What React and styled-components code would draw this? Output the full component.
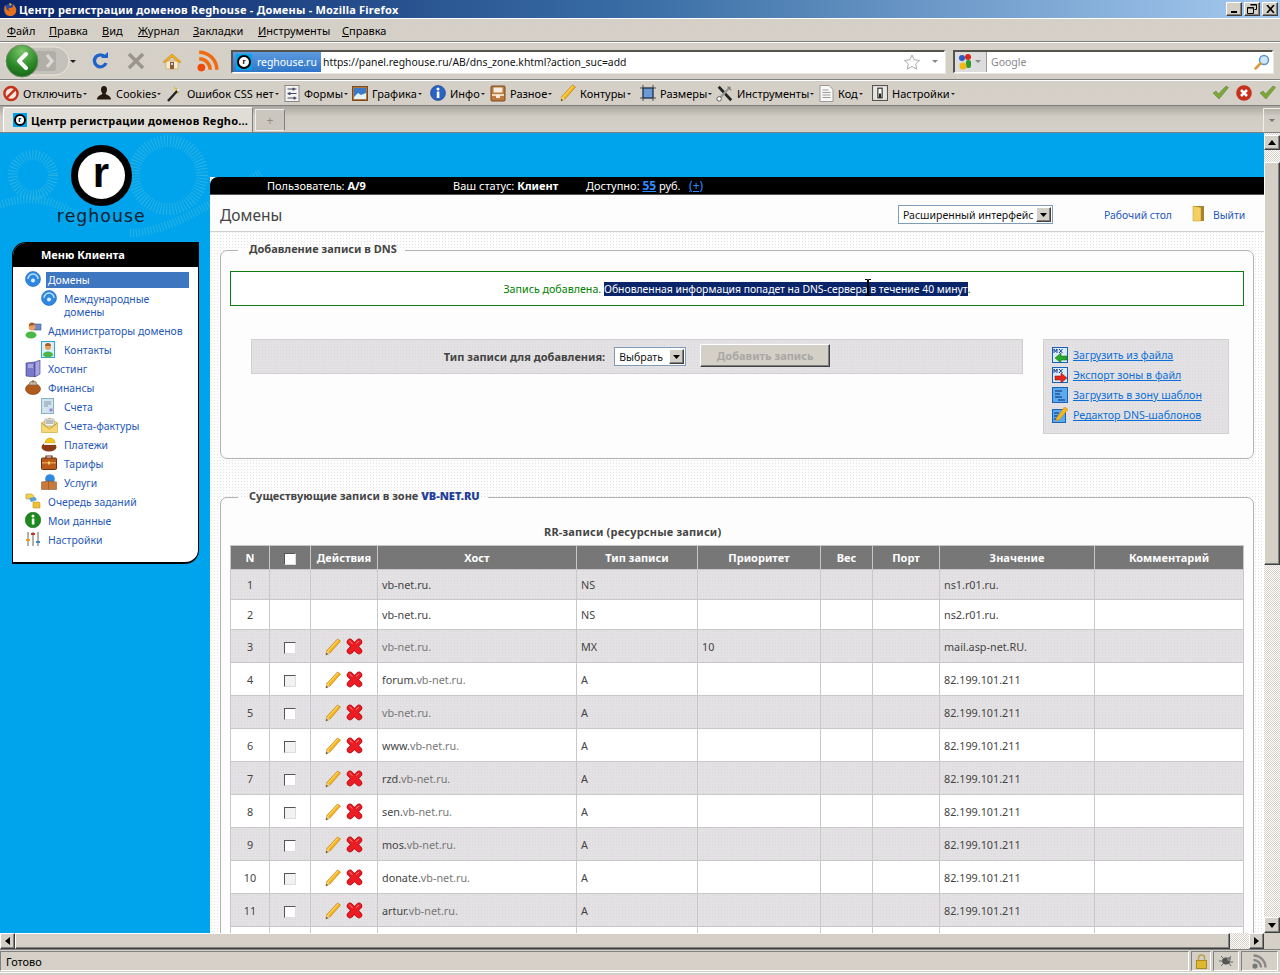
import React from 'react';
import styled, { createGlobalStyle } from 'styled-components';

const Global = createGlobalStyle`
  html, body { margin: 0; padding: 0; height: 100%; overflow: hidden; background: #d4d0c8; }
  body { font-family: "Noto Sans", "DejaVu Sans", sans-serif; font-size: 11px; color: #000; }
  * { box-sizing: border-box; }
`;

const chrome = `
  background-color: #d4d0c8;
  background-image: radial-gradient(#dcd2c2 0.7px, transparent 0.8px);
  background-size: 5px 5px;
`;
const dots = `
  background-color: #fdfdfd;
  background-image: radial-gradient(#e4e4e4 0.8px, transparent 0.9px);
  background-size: 3px 3px;
`;
const grayDots = `
  background-color: #e3e1e3;
  background-image: radial-gradient(#d8d8d8 0.8px, transparent 0.9px);
  background-size: 3px 3px;
`;
const raised = `
  background-color: #d4d0c8;
  border-top: 1px solid #fff; border-left: 1px solid #fff;
  border-right: 1px solid #404040; border-bottom: 1px solid #404040;
  box-shadow: inset -1px -1px 0 #808080;
`;
const dither = `
  background: repeating-conic-gradient(#d4d0c8 0 25%, #fff 0 50%) 0 0 / 2px 2px;
`;

const Window = styled.div`
  width: 1280px; height: 975px; display: flex; flex-direction: column; overflow: hidden;
  ${chrome}
`;
const TitleBar = styled.div`
  height: 18px; flex: none; display: flex; align-items: center; padding: 0 2px 0 3px;
  background: linear-gradient(90deg, #0a246a 0%, #3a6ea5 50%, #a6caf0 100%);
`;
const TitleText = styled.div`
  flex: 1; margin-left: 2px; color: #fff; font-weight: 700; font-size: 11px; letter-spacing: 0.22px;
  white-space: nowrap;
`;
const WinButtons = styled.div`display: flex; gap: 2px;`;
const WinButton = styled.div`
  width: 16px; height: 14px; ${raised} display: flex; align-items: center; justify-content: center;
`;
const MenuBar = styled.div`
  height: 24px; flex: none; display: flex; align-items: center; padding-left: 7px;
  border-top: 1px solid #fff; border-bottom: 1px solid #808080;
`;
const MenuItem = styled.div`
  width: ${p => p.$w}px; flex: none; white-space: nowrap;
  & u { text-decoration: underline; }
`;
const NavBar = styled.div`
  height: 38px; flex: none; display: flex; align-items: center; padding: 0 8px 0 4px;
  border-top: 1px solid #fff; border-bottom: 1px solid #808080;
`;
const BackForward = styled.div`
  width: 76px; height: 30px; flex: none; margin-right: 2px; display: flex; align-items: center;
`;
const NavIcon = styled.div`
  width: 36px; flex: none; display: flex; justify-content: center; align-items: center;
`;
const UrlBar = styled.div`
  width: 714px; height: 23px; flex: none; margin-left: 5px; display: flex; align-items: stretch;
  background: #fff; border: 1px solid #fff; border-top: 2px solid #55534c; border-left: 2px solid #55534c;
  box-shadow: 1px 1px 0 #e8e6e0; font-size: 10.4px;
`;
const Identity = styled.div`
  width: 88px; flex: none; display: flex; align-items: center; gap: 5px; padding-left: 3px; color: #fff;
  background: linear-gradient(#5c9ce0, #2f74c8);
`;
const UrlText = styled.div`flex: 1; padding: 3px 0 0 2px; color: #111; white-space: nowrap;`;
const BarEnd = styled.div`display: flex; align-items: center; gap: 12px; padding-right: 6px;`;
const Caret = styled.span`
  display: inline-block; width: 0; height: 0; flex: none;
  border-left: ${p => p.$s || 3}px solid transparent; border-right: ${p => p.$s || 3}px solid transparent;
  border-top: ${p => p.$s || 3}px solid ${p => p.$c || '#666'};
`;
const SearchBar = styled.div`
  width: 320px; height: 23px; flex: none; margin-left: 8px; display: flex; align-items: stretch;
  background: #fff; border: 1px solid #fff; border-top: 2px solid #55534c; border-left: 2px solid #55534c;
  box-shadow: 1px 1px 0 #e8e6e0; font-size: 10.5px;
`;
const Engine = styled.div`
  width: 32px; flex: none; display: flex; align-items: center; gap: 3px; padding-left: 3px;
  background: #ddd; border-right: 1px solid #999;
`;
const SearchText = styled.div`flex: 1; padding: 3px 0 0 4px; color: #888;`;
const SearchGo = styled.div`display: flex; align-items: center; padding-right: 2px;`;
const DevBar = styled.div`
  height: 26px; flex: none; display: flex; align-items: center; padding: 0 3px 0 3px;
  border-top: 1px solid #fff; border-bottom: 1px solid #808080;
`;
const DevItem = styled.div`
  width: ${p => p.$w}px; flex: none; display: flex; align-items: center; gap: 4px; white-space: nowrap;
  & > svg { flex: none; }
`;
const TinyCaret = styled.span`
  display: inline-block; width: 0; height: 0; margin: 0 0 0 1px; vertical-align: 3px;
  border-left: 2px solid transparent; border-right: 2px solid transparent; border-top: 2px solid #222;
`;
const DevEnd = styled.div`margin-left: auto; display: flex; gap: 7px; padding-right: 1px;`;
const TabBar = styled.div`
  height: 27px; flex: none; display: flex; align-items: flex-end; padding-left: 3px;
  background: linear-gradient(#a9a69e, #d0ccc4 40%, #d4d0c8);
  border-bottom: 1px solid #808080;
`;
const Tab = styled.div`
  width: 250px; height: 25px; flex: none; display: flex; align-items: center; gap: 4px; padding-left: 9px;
  background: #e0ddd6; border: 1px solid #fff; border-right-color: #808080; border-bottom: none;
  border-radius: 2px 2px 0 0; font-weight: 700; white-space: nowrap; overflow: hidden; letter-spacing: 0.2px;
`;
const NewTab = styled.div`
  width: 30px; height: 22px; flex: none; margin: 0 0 1px 2px; display: flex; align-items: center; justify-content: center;
  color: #8f8c85; font-size: 12px; background: #cbc7bf; border: 1px solid #eee; border-right-color: #808080;
`;
const TabList = styled.div`
  width: 17px; height: 24px; flex: none; margin-left: auto; display: flex; align-items: center; justify-content: center;
  border: 1px solid #f2f0ea; border-right: none; border-bottom: none;
`;
const Viewport = styled.div`flex: none; height: 800px; display: flex;`;
const Page = styled.div`
  position: relative; width: 1264px; flex: none; display: flex; overflow: hidden;
  background-color: #00a4ec;
`;
const Swirl = styled.svg`position: absolute; left: 0; top: 0;`;
const SideColumn = styled.div`
  position: relative; width: 210px; flex: none; padding-left: 12px; display: flex; flex-direction: column;
`;
const Logo = styled.div`
  height: 109px; width: 178px; flex: none; display: flex; flex-direction: column; align-items: center; padding-top: 12px;
  color: #111;
`;
const LogoRing = styled.div`
  width: 61px; height: 61px; border-radius: 50%; border: 7px solid #000; background: #fff;
  display: flex; align-items: center; justify-content: center;
  font: 700 42px/1 "Liberation Sans", sans-serif; color: #000; padding-bottom: 6px;
`;
const LogoName = styled.div`
  font: 400 18px/20px "DejaVu Sans", sans-serif; letter-spacing: 1.1px; color: #10202c; transform: scaleX(.96);
`;
const SideMenu = styled.nav`
  width: 187px; flex: none; background: #fff; border: 1px solid #000; border-bottom-width: 2px;
  border-radius: 14px 0 14px 0; overflow: hidden; padding-bottom: 12px;
`;
const SideHead = styled.div`
  height: 24px; background: #000; color: #fff; font-weight: 700; padding-left: 28px; line-height: 23px; margin-bottom: 4px;
`;
const SideRow = styled.div`
  display: flex; align-items: flex-start; padding: 3px 9px 3px ${p => (p.$sub ? 28 : 12)}px;
  line-height: 13px; color: #2457b8; font-size: 10.4px;
`;
const SideIcon = styled.div`width: 16px; height: 16px; margin-top: -3px; flex: none;`;
const SideLabel = styled.div`
  flex: 1; margin-left: 7px; white-space: nowrap;
  ${p => p.$on ? `
    margin-left: 5px; padding-left: 2px; color: #fff; margin-top: -2px; margin-bottom: -1px; padding-top: 2px; padding-bottom: 1px;
    background-color: #3f76c0;
  ` : ''}
`;
const Content = styled.main`
  position: relative; width: 1054px; flex: none; margin-top: 44px; display: flex; flex-direction: column; ${dots}
`;
const UserBar = styled.div`
  height: 18px; flex: none; background: #000; color: #fff; display: flex; align-items: center; line-height: 16px;
  border-radius: 8px 0 0 0; border-bottom: 1px solid #555;
`;
const UserCell = styled.div`width: ${p => p.$w}px; flex: none; white-space: nowrap;`;
const UserLink = styled.a`color: #2f8cff; font-size: 12px; text-decoration: underline;`;
const Header = styled.div`
  height: 37px; flex: none; background: #fdfdfd; border-bottom: 1px solid #d0d0d0; display: flex; align-items: center; padding: 3px 0 0 10px;
`;
const PageTitle = styled.h1`margin: 0; width: 678px; flex: none; font-size: 15.5px; font-weight: 400; color: #444;`;
const SelectBox = styled.div`
  display: flex; align-items: center; justify-content: space-between; width: ${p => p.$w}px; height: ${p => p.$h}px; flex: none;
  margin-left: ${p => p.$m || 0}px; font-weight: 400; font-size: 10.5px;
  background: #fff; border: 1px solid #7f9db9; padding: 0 1px 0 4px; color: #111; white-space: nowrap;
`;
const SelectArrow = styled.div`
  width: 15px; height: 15px; ${raised} display: flex; align-items: center; justify-content: center;
`;
const HeadLink = styled.a`color: #2457b8; white-space: nowrap; margin-left: ${p => p.$m}px; font-size: 10.4px;`;
const DoorWrap = styled.div`margin-left: 20px; width: 21px; flex: none;`;
const Body = styled.div`padding: 10px 10px 0;`;
const Fieldset = styled.fieldset`
  margin: 0 0 30px; padding: 13px 9px 0; min-width: 0; background: #fdfdfd;
  border: 1px solid #b5b1ad; border-radius: 7px;
`;
const Legend = styled.legend`
  margin-left: 8px; padding: 0 8px 3px 11px; font-weight: 700; color: #444; line-height: 13px;
  & b { color: #1f3f9a; }
`;
const Message = styled.div`
  height: 35px; border: 1px solid #0f7a0f; background: #fff; display: flex; align-items: center; justify-content: center;
  color: #008000; white-space: pre; font-size: 10.7px;
`;
const Selected = styled.span`background: #0a246a; color: #fff; font-size: 10.38px;`;
const CursorAnchor = styled.span`position: relative; display: inline-block; width: 0; height: 0;`;
const IBeam = styled.svg`position: absolute; left: -4px; top: -14px;`;
const AddArea = styled.div`display: flex; align-items: flex-start; padding: 33px 0 24px 21px;`;
const AddBar = styled.div`
  width: 772px; height: 35px; flex: none; display: flex; align-items: center; justify-content: center;
  ${grayDots} border: 1px solid #d0d0d0; color: #444; font-weight: 700;
`;
const AddButton = styled.div`
  width: 130px; height: 23px; flex: none; margin: -2px 0 0 14px; display: flex; align-items: center; justify-content: center;
  ${raised} color: #a9a7a3; font-weight: 700;
`;
const SidePanel = styled.div`
  width: 186px; height: 95px; flex: none; margin-left: 20px; padding: 5px 0 0 8px;
  ${grayDots} border: 1px solid #d0d0d0; display: flex; flex-direction: column;
`;
const PanelLink = styled.a`
  height: 20px; display: flex; align-items: center; gap: 5px; color: #0a6fd8; text-decoration: underline; white-space: nowrap; font-size: 10.6px;
`;
const Caption = styled.div`height: 27px; padding: 7px 0 0 314px; line-height: 13px; color: #444; font-weight: 700; white-space: nowrap; letter-spacing: .18px;`;
const Table = styled.table`
  width: 1013px; table-layout: fixed; border-collapse: collapse; border-spacing: 0;
`;
const Th = styled.th`
  height: 24px; padding: 0; background: #777; color: #fff; font-weight: 700; font-size: 11px; border: 1px solid #c8c8c8;
`;
const Td = styled.td`
  padding: 0 0 0 ${p => (p.$center ? 0 : 4)}px; height: ${p => p.$h}px; color: #444;
  text-align: ${p => (p.$center ? 'center' : 'left')};
  border: 1px solid #c8c8c8; white-space: nowrap; font-size: 10.8px;
`;
const Tr = styled.tr`
  ${p => p.$odd ? grayDots : 'background: #fff;'}
`;
const Dim = styled.span`color: #777;`;
const Check = styled.span`
  display: inline-block; width: 12px; height: 12px; vertical-align: middle; background: ${p => p.$light ? '#fff' : '#f2f2f2'};
  border-top: 1px solid #555; border-left: 1px solid #555; border-right: 1px solid #ddd; border-bottom: 1px solid #ddd;
`;
const Actions = styled.div`display: flex; justify-content: center; align-items: center; gap: 5px; padding-top: 1px;`;
const VScroll = styled.div`
  width: 16px; flex: none; display: flex; flex-direction: column; padding-top: 2px;
  ${dither}
`;
const ScrollBtn = styled.div`
  width: 16px; height: ${p => p.$h || 15}px; flex: none; ${raised} display: flex; align-items: center; justify-content: center;
`;
const VThumb = styled.div`height: 403px; margin-top: 12px; flex: none; ${raised} ${chrome}`;
const ScrollFill = styled.div`flex: 1;`;
const HScroll = styled.div`
  height: 16px; flex: none; display: flex;
  ${dither}
`;
const HThumb = styled.div`width: 1215px; flex: none; ${raised} ${chrome}`;
const HBtn = styled.div`
  width: 15px; flex: none; margin-left: ${p => p.$m || 0}px; ${raised} display: flex; align-items: center; justify-content: center;
`;
const Corner = styled.div`flex: 1; ${chrome}`;
const StatusBar = styled.div`
  height: 23px; flex: none; display: flex; gap: 2px; padding: 0 2px 0 0;
  border-top: 1px solid #808080;
`;
const StatusPanel = styled.div`
  width: ${p => p.$w ? p.$w + 'px' : 'auto'}; flex: ${p => p.$w ? 'none' : 1}; height: 20px; margin-top: 1px; display: flex; align-items: center;
  justify-content: ${p => p.$w ? 'center' : 'flex-start'}; padding-left: ${p => p.$w ? 0 : 5}px;
  border-top: 1px solid #808080; border-left: 1px solid #808080; border-right: 1px solid #fff; border-bottom: 1px solid #fff;
`;
const Tail = styled.div`flex: 1; border-top: 1px solid #fff;`;
const FavBox = styled.span`
  width: ${p => p.$s}px; height: ${p => p.$s}px; flex: none; background: #00a4ec; display: inline-flex; align-items: center; justify-content: center;
`;
const FavRing = styled.span`
  width: ${p => p.$s}px; height: ${p => p.$s}px; border-radius: 50%; background: #fff; border: 2px solid #000; color: #000;
  display: inline-flex; align-items: center; justify-content: center;
  font: 700 8px/1 "Liberation Sans", sans-serif;
`;

/* ---------- drawings ---------- */
const Firefox = () => (
  <svg width="14" height="15" viewBox="0 0 14 15">
    <circle cx="7" cy="8" r="6.3" fill="#2a4a9a" />
    <path d="M2 3C1 6 1 11 4 13c3 2 8 1 9-3 1-3-1-6-3-8 1 3-1 4-3 4C5 6 5 8 7 9 5 9 3 7 3 5z" fill="#e8701a" />
    <path d="M6 1l3 1-2 2z" fill="#f7b020" />
  </svg>
);
const Favicon = ({ size = 14 }) => (
  <FavBox $s={size}><FavRing $s={size - 2}>r</FavRing></FavBox>
);
const Back = () => (
  <svg width="66" height="34" viewBox="0 0 66 34">
    <rect x="1" y="3" width="64" height="28" rx="14" fill="#c4c1ba" stroke="#e8e6e0" />
    <rect x="28" y="7" width="24" height="20" rx="3" fill="#b2afa8" />
    <path d="M43 11l5 6-5 6" fill="none" stroke="#dddbd5" strokeWidth="3" />
    <defs>
      <radialGradient id="gb" cx=".5" cy=".2" r=".9"><stop offset="0" stopColor="#7cc46a" /><stop offset=".55" stopColor="#2d8a28" /><stop offset="1" stopColor="#0f5a12" /></radialGradient>
    </defs>
    <circle cx="18" cy="17" r="16" fill="url(#gb)" stroke="#6f8f6a" />
    <path d="M22 10l-7 7 7 7" fill="none" stroke="#fff" strokeWidth="4" strokeLinecap="round" strokeLinejoin="round" />
  </svg>
);
const Reload = () => (
  <svg width="18" height="18" viewBox="0 0 18 18">
    <path d="M14 5A6 6 0 1 0 15 11" fill="none" stroke="#1f62c8" strokeWidth="3.4" />
    <path d="M10 6h7V0z" fill="#1f62c8" />
  </svg>
);
const StopX = () => (
  <svg width="18" height="18" viewBox="0 0 18 18"><path d="M2 2l14 14M16 2L2 16" stroke="#9a968e" strokeWidth="3.6" /></svg>
);
const Home = () => (
  <svg width="20" height="18" viewBox="0 0 20 18">
    <path d="M4 9v8h12V9z" fill="#f8ecc8" stroke="#c9a860" strokeWidth=".7" />
    <path d="M1 10L10 2l9 8-2 .5L10 5l-7 5.500z" fill="#f0b020" stroke="#d08a10" strokeWidth=".7" />
    <rect x="8" y="10" width="4" height="7" fill="#8a5a3a" />
    <rect x="9" y="11" width="2" height="2" fill="#bcd8f0" />
  </svg>
);
const Rss = ({ s = 22, c = '#f26a10', dot = '#f04a08' }) => (
  <svg width={s} height={s} viewBox="0 0 20 20">
    <circle cx="4" cy="16" r="3.500" fill={dot} />
    <path d="M2 8a10 10 0 0 1 10 10M2 2a16 16 0 0 1 16 16" fill="none" stroke={c} strokeWidth="3.2" />
  </svg>
);
const Star = () => (
  <svg width="16" height="16" viewBox="0 0 16 16"><path d="M8 1l2.200 4.800 5.300.6-3.900 3.500 1.100 5.200L8 12.500l-4.700 2.600 1.100-5.200L.5 6.400l5.300-.6z" fill="#fff" stroke="#aaa" /></svg>
);
const GoogleG = () => (
  <svg width="14" height="17" viewBox="0 0 14 17">
    <circle cx="4" cy="5" r="3" fill="#2a5ac8" /><circle cx="10" cy="4" r="3" fill="#d8281c" />
    <rect x="8" y="7" width="5" height="8" rx="2" fill="#2f9a2c" /><circle cx="5" cy="13" r="3.500" fill="#f4b818" />
  </svg>
);
const Magnifier = () => (
  <svg width="16" height="16" viewBox="0 0 16 16">
    <circle cx="10" cy="6" r="4.500" fill="#cfe6f8" stroke="#5a96c8" strokeWidth="1.500" />
    <path d="M6.500 9.500L1.500 14.500" stroke="#d89a3a" strokeWidth="2.500" strokeLinecap="round" />
  </svg>
);
const Ban = () => (
  <svg width="16" height="17" viewBox="0 0 17 17">
    <circle cx="8.500" cy="8.500" r="7" fill="#f6e8e0" stroke="#c8301c" strokeWidth="2.600" />
    <path d="M4 13L13 4" stroke="#c8301c" strokeWidth="2.600" />
  </svg>
);
const Person = () => (
  <svg width="16" height="16" viewBox="0 0 16 16"><path d="M5 4.500a3 3.500 0 0 1 6 0c0 2-1 3.500-1.500 4 .5 1.500 5.500 2 5.500 6H1c0-4 5-4.500 5.500-6C6 8 5 6.500 5 4.500z" fill="#241a10" /></svg>
);
const Wand = () => (
  <svg width="17" height="17" viewBox="0 0 17 17">
    <path d="M8 1l1 3 3-1-2 3 3 2-4 .5" fill="#f4d860" stroke="#c8a020" strokeWidth=".5" />
    <path d="M2 16L12 5" stroke="#222" strokeWidth="2.400" />
    <path d="M11 6l2-2" stroke="#eee" strokeWidth="2" />
  </svg>
);
const FormIco = () => (
  <svg width="16" height="17" viewBox="0 0 15 17">
    <rect x=".5" y=".5" width="14" height="16" fill="#f4f4f0" stroke="#888" />
    <path d="M3 4h9M3 8.500h9M3 13h9" stroke="#446" strokeWidth="1.200" />
    <rect x="8" y="2.800" width="2" height="2.600" fill="#446" /><rect x="4" y="7.300" width="2" height="2.600" fill="#446" /><rect x="9" y="11.800" width="2" height="2.600" fill="#446" />
  </svg>
);
const PicIco = () => (
  <svg width="16" height="16" viewBox="0 0 16 16">
    <rect x=".5" y="1.500" width="15" height="14" fill="#b0763a" stroke="#7a4a20" />
    <rect x="2" y="3" width="12" height="11" fill="#3a7ac8" />
    <path d="M2 12l4-4 3 2 5-2v6H2z" fill="#e8f2fa" />
  </svg>
);
const InfoIco = () => (
  <svg width="16" height="16" viewBox="0 0 16 16">
    <circle cx="8" cy="8" r="7.500" fill="#2a62c4" stroke="#1a3a8a" strokeWidth=".6" />
    <rect x="6.800" y="6.500" width="2.600" height="6.500" fill="#fff" /><circle cx="8" cy="4" r="1.500" fill="#fff" />
  </svg>
);
const BoxIco = () => (
  <svg width="16" height="17" viewBox="0 0 16 17">
    <rect x="1" y="1" width="14" height="15" rx="1" fill="#bd7a3c" stroke="#7a4a20" />
    <rect x="3.500" y="2.500" width="9" height="5" fill="#f6ece0" /><rect x="2" y="9" width="12" height="2" fill="#f0d8b8" />
    <rect x="6" y="10" width="4" height="3" fill="#f6ece0" />
  </svg>
);
const PencilIco = ({ w = 16, h = 18 }) => (
  <svg width={w} height={h} viewBox="0 0 16 18">
    <path d="M12.500 1L15.500 3 5 15 1 17l.8-4.500z" fill="#f7b51c" stroke="#b8760c" strokeWidth=".6" />
    <path d="M1.800 12.500L1 17l4-2z" fill="#eecc90" />
    <path d="M1.300 15L1 17l2-1z" fill="#333" />
    <path d="M3 13L13 2" stroke="#ffe27a" strokeWidth="1" />
  </svg>
);
const CropIco = () => (
  <svg width="16" height="16" viewBox="0 0 16 16">
    <rect x="3" y="3" width="10" height="10" fill="#6a9ad8" stroke="#203a6a" />
    <path d="M3 0v16M13 0v16M0 3h16M0 13h16" stroke="#333" strokeWidth=".8" />
  </svg>
);
const ToolsIco = () => (
  <svg width="17" height="19" viewBox="0 0 19 19">
    <path d="M3 2l14 15" stroke="#222" strokeWidth="3" />
    <path d="M16 2L3 16" stroke="#999" strokeWidth="2.600" />
    <circle cx="3.500" cy="15.500" r="2.500" fill="#fff" stroke="#555" />
    <path d="M13 1l5 5-2 0-3-3z" fill="#777" />
  </svg>
);
const CodeIco = () => (
  <svg width="15" height="17" viewBox="0 0 14 17">
    <path d="M.5.500h9l4 4v12H.5z" fill="#f8f8f6" stroke="#999" />
    <path d="M3 5h6M3 7.500h8M3 10h8M3 12.500h8" stroke="#999" />
  </svg>
);
const SwitchIco = () => (
  <svg width="16" height="16" viewBox="0 0 15 15">
    <rect x=".5" y=".5" width="14" height="14" fill="#e8e6e0" stroke="#555" />
    <rect x="5.500" y="3" width="4" height="9" fill="#fff" stroke="#222" /><rect x="6.500" y="8" width="2" height="4" fill="#222" />
  </svg>
);
const CheckIco = ({ c = '#7aa83a' }) => (
  <svg width="17" height="15" viewBox="0 0 17 15"><path d="M1 8l3-2 2.500 3L14 1l2.500 1.500L7 14z" fill={c} stroke="#5a7a2a" strokeWidth=".5" /></svg>
);
const StopRed = () => (
  <svg width="16" height="16" viewBox="0 0 16 16">
    <circle cx="8" cy="8" r="7.800" fill="#c8301c" />
    <path d="M5 5l6 6M11 5l-6 6" stroke="#fff" strokeWidth="2.600" />
  </svg>
);
const BigX = ({ s = 17 }) => (
  <svg width={s} height={s} viewBox="0 0 17 17">
    <path d="M4 4l9 9M13 4l-9 9" stroke="#b80e14" strokeWidth="6.400" strokeLinecap="round" />
    <path d="M4 4l9 9M13 4l-9 9" stroke="#ec1c24" strokeWidth="5" strokeLinecap="round" />
    <path d="M3.500 3l3 2.500M13 3l-3 2.500" stroke="#f88" strokeWidth="1" />
  </svg>
);
const Globe = () => (
  <svg width="16" height="16" viewBox="0 0 16 16">
    <circle cx="8" cy="8" r="7.500" fill="#2f88e0" stroke="#1a62b8" strokeWidth=".6" />
    <path d="M3 8a5 5 0 0 1 10 0" fill="none" stroke="#bfe2fb" strokeWidth="1.400" />
    <circle cx="8" cy="9.500" r="2" fill="#d8eeff" />
  </svg>
);
const Admin = () => (
  <svg width="17" height="17" viewBox="0 0 17 17">
    <rect x="9" y="2" width="7" height="6" fill="#6a8ac8" stroke="#3a5a98" strokeWidth=".6" />
    <circle cx="7" cy="5" r="3.400" fill="#e8a060" /><path d="M4 4a3 3 0 0 1 6-1z" fill="#a85a20" />
    <ellipse cx="6" cy="13" rx="5.500" ry="3.500" fill="#4ab848" />
  </svg>
);
const Contact = () => (
  <svg width="14" height="17" viewBox="0 0 14 17">
    <rect x=".5" y=".5" width="13" height="16" fill="#d8f0fa" stroke="#3aa0d8" />
    <circle cx="7" cy="6" r="3" fill="#e8a060" /><path d="M4 5a3 3 0 0 1 6 0z" fill="#a85a20" />
    <ellipse cx="7" cy="13.500" rx="5" ry="3" fill="#4ab848" />
  </svg>
);
const Server = () => (
  <svg width="16" height="17" viewBox="0 0 16 17">
    <path d="M1 3l9-1v15l-9-1z" fill="#7a78c8" stroke="#3a3888" strokeWidth=".6" />
    <path d="M10 2l5-2v14l-5 3z" fill="#a8a6e0" stroke="#3a3888" strokeWidth=".6" />
    <path d="M3 5h5M3 7h5" stroke="#d8d8f4" />
  </svg>
);
const Purse = () => (
  <svg width="16" height="16" viewBox="0 0 16 16">
    <ellipse cx="8" cy="10" rx="7.500" ry="5.500" fill="#b05a1c" stroke="#7a3a10" strokeWidth=".6" />
    <path d="M4 6a4 4 0 0 1 8 0z" fill="#c8b8a0" stroke="#7a6a50" strokeWidth=".6" />
    <circle cx="8" cy="2.500" r="1.200" fill="#8a7a60" />
  </svg>
);
const Invoice = () => (
  <svg width="14" height="16" viewBox="0 0 14 16">
    <rect x=".5" y=".5" width="12" height="15" fill="#cfe4ee" stroke="#8ab0c4" />
    <path d="M3 4h7M3 6h7M3 8h4" stroke="#8a9aa8" /><circle cx="10" cy="12" r="1.800" fill="#9a8ad8" />
  </svg>
);
const Letter = () => (
  <svg width="17" height="16" viewBox="0 0 17 16">
    <path d="M.5 6L8.500 1l8 5v9.500H.5z" fill="#f6d878" stroke="#c8a030" strokeWidth=".6" />
    <rect x="4" y="2" width="9" height="7" fill="#f4f4f4" stroke="#888" strokeWidth=".5" />
    <path d="M5 4h7M5 6h7" stroke="#667" strokeWidth=".8" />
    <path d="M.5 6l8 6 8-6" fill="none" stroke="#c8a030" />
  </svg>
);
const Helmet = () => (
  <svg width="16" height="16" viewBox="0 0 16 16">
    <ellipse cx="8" cy="11" rx="7.500" ry="4.500" fill="#8a3a14" />
    <path d="M4 7a5 5 0 0 1 10 0z" fill="#f4c818" stroke="#b89010" strokeWidth=".5" />
    <rect x="3" y="7" width="11" height="2" fill="#f4f0e0" />
  </svg>
);
const Case = () => (
  <svg width="16" height="15" viewBox="0 0 16 15">
    <rect x=".5" y="3" width="15" height="11.500" rx="1" fill="#b85a1c" stroke="#6a3010" />
    <path d="M5 3V1h6v2" fill="none" stroke="#6a3010" strokeWidth="1.200" />
    <rect x="1" y="7" width="14" height="1.500" fill="#e89a50" /><rect x="7" y="6.500" width="2" height="3" fill="#f4d860" />
  </svg>
);
const Service = () => (
  <svg width="16" height="16" viewBox="0 0 16 16">
    <circle cx="9" cy="5" r="4.800" fill="#2f88e0" />
    <path d="M.5 8l7-1 8 1v7.500H.5z" fill="#c87a3c" stroke="#7a4a20" strokeWidth=".5" />
    <path d="M7.500 7v8.500" stroke="#7a4a20" strokeWidth=".5" />
  </svg>
);
const Queue = () => (
  <svg width="16" height="16" viewBox="0 0 16 16">
    <path d="M1 1h6l2 2v3H1z" fill="#f0d050" stroke="#a88a20" strokeWidth=".5" />
    <path d="M4 5l6-1 2 3-6 2z" fill="#5aa0d8" />
    <path d="M8 9h6l1 1v5H8z" fill="#f0c030" stroke="#a88a20" strokeWidth=".5" />
  </svg>
);
const InfoGreen = () => (
  <svg width="16" height="16" viewBox="0 0 16 16">
    <circle cx="8" cy="8" r="7.800" fill="#1c8a1c" stroke="#0c5a0c" strokeWidth=".5" />
    <rect x="6.800" y="6.500" width="2.600" height="6" fill="#fff" /><circle cx="8" cy="4" r="1.500" fill="#fff" />
  </svg>
);
const Sliders = () => (
  <svg width="16" height="16" viewBox="0 0 16 16">
    <path d="M3 1v14M8 1v14M13 1v14" stroke="#999" strokeWidth="1.500" />
    <rect x="1" y="8" width="4" height="2" fill="#e8a020" /><rect x="6" y="2" width="4" height="2" fill="#c83020" /><rect x="11" y="10" width="4" height="2" fill="#3a8ac8" />
  </svg>
);
const Door = () => (
  <svg width="13" height="17" viewBox="0 0 13 17">
    <path d="M1 1h11v15H1z" fill="#a88030" />
    <path d="M1 1l8 1.500V16H1z" fill="#f4d060" stroke="#b8902a" strokeWidth=".5" />
  </svg>
);
const Mx = ({ arrow }) => (
  <svg width="16" height="16" viewBox="0 0 16 16">
    <rect x=".5" y=".5" width="15" height="15" fill="#d8ecfa" stroke="#1a62b8" />
    <path d="M2 6V2l1.500 2.500L5 2v4M7 2l3.500 4M10.500 2L7 6" fill="none" stroke="#1a3a8a" />
    {arrow === 'in'
      ? <path d="M3 11l6-5v3h6v4H9v3z" fill="#2aa82a" stroke="#0c6a0c" strokeWidth=".5" />
      : <path d="M15 11l-6-5v3H3v4h6v3z" fill="#e42a1c" stroke="#8a0c0c" strokeWidth=".5" />}
  </svg>
);
const Template = () => (
  <svg width="16" height="16" viewBox="0 0 16 16">
    <rect x=".5" y=".5" width="15" height="15" fill="#5aaaf0" stroke="#1a62b8" />
    <path d="M3 4h7M3 7h5M3 10h7M6 13h7" stroke="#0c2a6a" />
  </svg>
);
const TemplateEdit = () => (
  <svg width="16" height="16" viewBox="0 0 16 16">
    <rect x=".5" y="2.500" width="13" height="13" fill="#5aaaf0" stroke="#1a62b8" />
    <path d="M2 6h5M2 9h4M2 12h3" stroke="#0c2a6a" />
    <path d="M12.500 0L16 2.500 7 13l-3 1 .5-3z" fill="#f7b51c" stroke="#c8820e" strokeWidth=".5" />
  </svg>
);
const Lock = () => (
  <svg width="11" height="15" viewBox="0 0 11 15">
    <path d="M2.500 7V4a3 3 0 0 1 6 0v3" fill="none" stroke="#b8a050" strokeWidth="1.500" />
    <rect x=".5" y="6.500" width="10" height="8" fill="#e0b830" stroke="#a88a20" />
  </svg>
);
const Spider = () => (
  <svg width="16" height="14" viewBox="0 0 16 14">
    <ellipse cx="8" cy="7" rx="4" ry="3.500" fill="#555" /><circle cx="11" cy="5" r="2" fill="#888" />
    <path d="M3 2l3 3M1 7h4M3 12l3-3M13 2l-2 3M15 8h-4M13 12l-2-3" stroke="#666" />
  </svg>
);
const TriLeft = () => <svg width="5" height="8"><path d="M5 0v8L0 4z" fill="#000" /></svg>;
const TriRight = () => <svg width="5" height="8"><path d="M0 0v8l5-4z" fill="#000" /></svg>;
const TriUp = () => <svg width="8" height="5"><path d="M0 5h8L4 0z" fill="#000" /></svg>;
const TriDown = () => <svg width="8" height="5"><path d="M0 0h8L4 5z" fill="#000" /></svg>;
const Arrow = () => <svg width="7" height="4"><path d="M0 0h7L3.500 4z" fill="#000" /></svg>;

/* ---------- data ---------- */
const menus = [['Ф', 'айл', 42], ['П', 'равка', 53], ['В', 'ид', 36], ['Ж', 'урнал', 55], ['З', 'акладки', 65], ['И', 'нструменты', 84], ['С', 'правка', 60]];
const devItems = [
  [Ban, 'Отключить', 93], [Person, 'Cookies', 70], [Wand, 'Ошибок CSS нет', 118], [FormIco, 'Формы', 68], [PicIco, 'Графика', 78],
  [InfoIco, 'Инфо', 60], [BoxIco, 'Разное', 70], [PencilIco, 'Контуры', 80], [CropIco, 'Размеры', 76], [ToolsIco, 'Инструменты', 103],
  [CodeIco, 'Код', 53], [SwitchIco, 'Настройки', 90],
];
const side = [
  [Globe, 'Домены', 0, true], [Globe, <>Международные<br />домены</>, 1], [Admin, 'Администраторы доменов', 0], [Contact, 'Контакты', 1],
  [Server, 'Хостинг', 0], [Purse, 'Финансы', 0], [Invoice, 'Счета', 1], [Letter, 'Счета-фактуры', 1], [Helmet, 'Платежи', 1],
  [Case, 'Тарифы', 1], [Service, 'Услуги', 1], [Queue, 'Очередь заданий', 0], [InfoGreen, 'Мои данные', 0], [Sliders, 'Настройки', 0],
];
const cols = [39, 41, 67, 199, 121, 123, 52, 67, 155, 149];
const heads = ['N', null, 'Действия', 'Хост', 'Тип записи', 'Приоритет', 'Вес', 'Порт', 'Значение', 'Комментарий'];
const ip = '82.199.101.211';
const rows = [
  { n: 1, host: '', base: 'vb-net.ru.', dark: true, type: 'NS', val: 'ns1.r01.ru.', h: 30 },
  { n: 2, host: '', base: 'vb-net.ru.', dark: true, type: 'NS', val: 'ns2.r01.ru.', h: 30 },
  { n: 3, host: '', base: 'vb-net.ru.', type: 'MX', pr: '10', val: 'mail.asp-net.RU.', h: 33, acts: true },
  { n: 4, host: 'forum.', base: 'vb-net.ru.', type: 'A', val: ip, h: 33, acts: true },
  { n: 5, host: '', base: 'vb-net.ru.', type: 'A', val: ip, h: 33, acts: true },
  { n: 6, host: 'www.', base: 'vb-net.ru.', type: 'A', val: ip, h: 33, acts: true },
  { n: 7, host: 'rzd.', base: 'vb-net.ru.', type: 'A', val: ip, h: 33, acts: true },
  { n: 8, host: 'sen.', base: 'vb-net.ru.', type: 'A', val: ip, h: 33, acts: true },
  { n: 9, host: 'mos.', base: 'vb-net.ru.', type: 'A', val: ip, h: 33, acts: true },
  { n: 10, host: 'donate.', base: 'vb-net.ru.', type: 'A', val: ip, h: 33, acts: true },
  { n: 11, host: 'artur.', base: 'vb-net.ru.', type: 'A', val: ip, h: 33, acts: true },
  { n: '', host: '', base: '', type: '', val: '', h: 33 },
];

export default function App() {
  return (
    <Window>
      <Global />
      <TitleBar>
        <Firefox />
        <TitleText>Центр регистрации доменов Reghouse - Домены - Mozilla Firefox</TitleText>
        <WinButtons>
          <WinButton><svg width="8" height="8"><rect x="1" y="6" width="6" height="2" /></svg></WinButton>
          <WinButton><svg width="10" height="10"><path d="M3.500.5h6v5h-2M.5 3.500h6v6h-6z M.5 4h6M3.500 1h6" fill="none" stroke="#000" /></svg></WinButton>
          <WinButton><svg width="9" height="8"><path d="M1 0l7 8M8 0L1 8" stroke="#000" strokeWidth="1.600" /></svg></WinButton>
        </WinButtons>
      </TitleBar>

      <MenuBar>
        {menus.map(([a, b, w]) => <MenuItem key={a + b} $w={w}><u>{a}</u>{b}</MenuItem>)}
      </MenuBar>

      <NavBar>
        <BackForward><Back /><Caret $s={3} $c="#222" /></BackForward>
        <NavIcon><Reload /></NavIcon>
        <NavIcon><StopX /></NavIcon>
        <NavIcon><Home /></NavIcon>
        <NavIcon><Rss /></NavIcon>
        <UrlBar>
          <Identity><Favicon size={16} />reghouse.ru</Identity>
          <UrlText>https://panel.reghouse.ru/AB/dns_zone.khtml?action_suc=add</UrlText>
          <BarEnd><Star /><Caret $s={3} $c="#888" /></BarEnd>
        </UrlBar>
        <SearchBar>
          <Engine><GoogleG /><Caret $s={3} $c="#888" /></Engine>
          <SearchText>Google</SearchText>
          <SearchGo><Magnifier /></SearchGo>
        </SearchBar>
      </NavBar>

      <DevBar>
        {devItems.map(([I, t, w]) => (
          <DevItem key={t} $w={w}><I /><span>{t}<TinyCaret /></span></DevItem>
        ))}
        <DevEnd><CheckIco /><StopRed /><CheckIco /></DevEnd>
      </DevBar>

      <TabBar>
        <Tab><Favicon size={14} />Центр регистрации доменов Regho...</Tab>
        <NewTab>+</NewTab>
        <TabList><Caret $s={3} $c="#777" /></TabList>
      </TabBar>

      <Viewport>
        <Page>
          <Swirl width="270" height="110" viewBox="0 0 270 110">
            <g fill="none" stroke="#2ab2e2" strokeDasharray="1 2">
              <circle cx="33" cy="42" r="20" strokeWidth="10" />
              <circle cx="168" cy="42" r="34" strokeWidth="12" />
              <path d="M0 72c30-12 60-4 80 14M130 100c30 0 70-20 130-60" strokeWidth="8" />
            </g>
          </Swirl>
          <SideColumn>
            <Logo>
              <LogoRing>r</LogoRing>
              <LogoName>reghouse</LogoName>
            </Logo>
            <SideMenu>
              <SideHead>Меню Клиента</SideHead>
              {side.map(([I, t, sub, on], i) => (
                <SideRow key={i} $sub={!!sub}>
                  <SideIcon><I /></SideIcon>
                  <SideLabel $on={on}>{t}</SideLabel>
                </SideRow>
              ))}
            </SideMenu>
          </SideColumn>
          <Content>
            <UserBar>
              <UserCell $w={57} />
              <UserCell $w={186}>Пользователь: <b>А/9</b></UserCell>
              <UserCell $w={133}>Ваш статус: <b>Клиент</b></UserCell>
              <UserCell $w={200}>Доступно: <UserLink href="#"><b>55</b></UserLink> руб. &nbsp;&nbsp;<UserLink href="#">(+)</UserLink></UserCell>
            </UserBar>
            <Header>
              <PageTitle>Домены</PageTitle>
              <SelectBox $w={155} $h={19}>Расширенный интерфейс<SelectArrow><Arrow /></SelectArrow></SelectBox>
              <HeadLink $m={51}>Рабочий стол</HeadLink>
              <DoorWrap><Door /></DoorWrap>
              <HeadLink $m={0}>Выйти</HeadLink>
            </Header>
            <Body>
              <Fieldset>
                <Legend>Добавление записи в DNS</Legend>
                <Message>
                  Запись добавлена. <Selected>Обновленная информация попадет на DNS-сервера<CursorAnchor><IBeam width="8" height="17" viewBox="0 0 8 17"><path d="M1 .5h2.500v16H1M7 .5H4.500v16H7" fill="none" stroke="#000" /></IBeam></CursorAnchor> в течение 40 минут</Selected>.
                </Message>
                <AddArea>
                  <AddBar>
                    Тип записи для добавления:
                    <SelectBox $w={72} $h={19} $m={9}>Выбрать<SelectArrow><Arrow /></SelectArrow></SelectBox>
                    <AddButton>Добавить запись</AddButton>
                  </AddBar>
                  <SidePanel>
                    <PanelLink href="#"><Mx arrow="in" />Загрузить из файла</PanelLink>
                    <PanelLink href="#"><Mx arrow="out" />Экспорт зоны в файл</PanelLink>
                    <PanelLink href="#"><Template />Загрузить в зону шаблон</PanelLink>
                    <PanelLink href="#"><TemplateEdit />Редактор DNS-шаблонов</PanelLink>
                  </SidePanel>
                </AddArea>
              </Fieldset>
              <Fieldset>
                <Legend>Существующие записи в зоне <b>VB-NET.RU</b></Legend>
                <Caption>RR-записи (ресурсные записи)</Caption>
                <Table>
                  <colgroup>{cols.map((w, i) => <col key={i} width={w} />)}</colgroup>
                  <thead>
                    <tr>{heads.map((h, i) => <Th key={i}>{h === null ? <Check $light /> : h}</Th>)}</tr>
                  </thead>
                  <tbody>
                    {rows.map((r, i) => (
                      <Tr key={i} $odd={i % 2 === 0}>
                        <Td $center $h={r.h}>{r.n}</Td>
                        <Td $center>{r.acts && <Check $light={i % 2 === 0} />}</Td>
                        <Td $center>{r.acts && <Actions><PencilIco /><BigX /></Actions>}</Td>
                        <Td>{r.host}{r.dark ? r.base : <Dim>{r.base}</Dim>}</Td>
                        <Td>{r.type}</Td>
                        <Td>{r.pr}</Td>
                        <Td />
                        <Td />
                        <Td>{r.val}</Td>
                        <Td />
                      </Tr>
                    ))}
                  </tbody>
                </Table>
              </Fieldset>
            </Body>
          </Content>
        </Page>
        <VScroll>
          <ScrollBtn $h={15}><TriUp /></ScrollBtn>
          <VThumb />
          <ScrollFill />
          <ScrollBtn $h={16}><TriDown /></ScrollBtn>
        </VScroll>
      </Viewport>

      <HScroll>
        <HBtn><TriLeft /></HBtn>
        <HThumb />
        <HBtn $m={19}><TriRight /></HBtn>
        <Corner />
      </HScroll>

      <StatusBar>
        <StatusPanel>Готово</StatusPanel>
        <StatusPanel $w={20}><Lock /></StatusPanel>
        <StatusPanel $w={26}><Spider /></StatusPanel>
        <StatusPanel $w={37}><Rss s={15} c="#888" dot="#777" /></StatusPanel>
      </StatusBar>
      <Tail />
    </Window>
  );
}
